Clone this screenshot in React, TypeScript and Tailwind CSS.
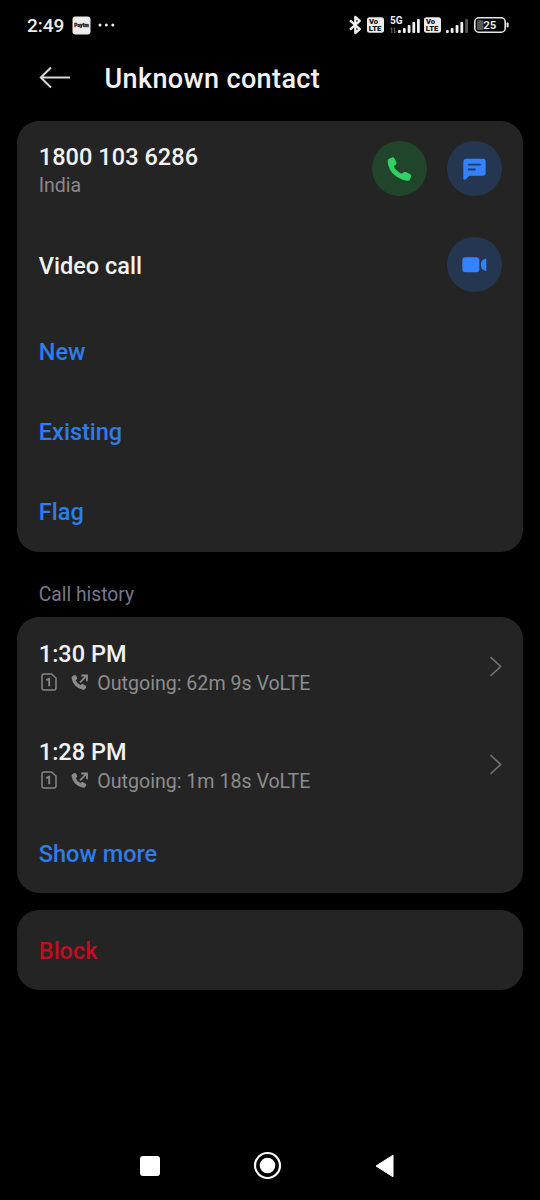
import React from "react";

// --- Status bar icons ---
const BluetoothIcon = () => (
  <svg width="14" height="20" viewBox="0 0 14 20" fill="none" stroke="#f0f0f0" strokeWidth="2.3">
    <path d="M2 5.3 L11.8 14.2 L7.3 18 V2 L11.8 5.8 L2 14.7" strokeLinejoin="round" />
  </svg>
);

const VolteBadge = () => (
  <svg width="17" height="16" viewBox="0 0 17 16">
    <rect y="0.3" width="17" height="15.4" rx="2.5" fill="#ececec" />
    <text x="2" y="7.4" fontSize="7.6" fontWeight="900" fill="#111">Vo</text>
    <text x="1.8" y="14" fontSize="7.6" fontWeight="900" fill="#111">LTE</text>
  </svg>
);

const SignalBars = ({ lastBar = "#f0f0f0" }: { lastBar?: string }) => (
  <svg width="22" height="15" viewBox="0 0 22 15" fill="#f0f0f0">
    <rect x="0" y="12" width="2.8" height="3" rx="1" />
    <rect x="4.7" y="10" width="2.8" height="5" rx="1" />
    <rect x="9.6" y="7" width="2.8" height="8" rx="1" />
    <rect x="14.4" y="4" width="2.8" height="11" rx="1" />
    <rect x="19.2" y="1" width="2.8" height="14" rx="1" fill={lastBar} />
  </svg>
);

const NetworkSignal = () => (
  <svg width="31" height="18" viewBox="0 0 31 18" fill="#f0f0f0">
    <text x="0" y="8" fontSize="10" fontWeight="700">5G</text>
    <path d="M1.8 17 V11.5 M0 13.3 L1.8 11.5 M4.5 11.5 V17 L6.3 15.2" stroke="#666" strokeWidth="1" fill="none" />
    <rect x="8" y="14" width="2.8" height="3" rx="1" />
    <rect x="12.9" y="12" width="2.8" height="5" rx="1" />
    <rect x="17.7" y="9" width="2.8" height="8" rx="1" />
    <rect x="22.4" y="6" width="2.8" height="11" rx="1" />
    <rect x="27" y="3" width="2.8" height="14" rx="1" />
  </svg>
);

const BatteryIcon = () => (
  <svg width="35" height="16" viewBox="0 0 35 16">
    <rect x="0.8" y="0.8" width="30.4" height="14.4" rx="4" fill="none" stroke="#e8e8e8" strokeWidth="1.6" />
    <rect x="3" y="3" width="6.5" height="10" rx="1.5" fill="#555" />
    <rect x="32.6" y="5.5" width="2" height="5" rx="0.8" fill="#e8e8e8" />
    <text x="15.7" y="12.2" textAnchor="middle" fontSize="11.5" fontWeight="600" fill="#f0f0f0">25</text>
  </svg>
);

const StatusBar = () => (
  <div className="flex h-[50px] items-center pl-[27px] pr-[31px]">
    <span className="w-[45px] text-[19px] leading-none font-medium text-[#eeeeee]">2:49</span>
    <svg width="19" height="19" viewBox="0 0 19 19">
      <rect x="0.5" y="0.5" width="18" height="18" rx="3" fill="#ececec" />
      <text x="9.5" y="11.3" textAnchor="middle" fontSize="5" fontWeight="900" fill="#222" stroke="#222" strokeWidth="0.3">Paytm</text>
    </svg>
    <svg className="ml-[7px]" width="17" height="4" viewBox="0 0 17 4" fill="#f0f0f0">
      <circle cx="2" cy="2" r="1.5" />
      <circle cx="8.3" cy="2" r="1.5" />
      <circle cx="14.8" cy="2" r="1.5" />
    </svg>
    <div className="ml-auto flex items-center">
      <BluetoothIcon />
      <div className="ml-[5px]"><VolteBadge /></div>
      <div className="ml-[6px]"><NetworkSignal /></div>
      <div className="ml-[3px]"><VolteBadge /></div>
      <div className="ml-[5px]"><SignalBars lastBar="#555" /></div>
      <div className="ml-[6px]"><BatteryIcon /></div>
    </div>
  </div>
);

// --- Action icons ---
const CallIcon = () => (
  <svg width="55" height="55" viewBox="0 0 165 165" fill="#32d164">
    <path d="M50 54 L58 50 Q65 47 68 53 L73 63 Q75 68 71 71 L65 76 Q72 91 88 98 L95 94 Q99 92 103 94 L115 100 Q119 103 117 108 L113 116 Q110 121 103 119 Q81 115 65 100 Q49 84 47 62 Q46 57 50 54 Z" />
  </svg>
);

const MessageIcon = () => (
  <svg width="55" height="55" viewBox="0 0 165 165" fill="#3482ff">
    <path d="M58 53 H107 Q116 53 116 62 V95 Q116 104 107 104 H67 L55 116 Q49 118 49 112 V62 Q49 53 58 53 Z" />
    <path d="M65 71 H99 M65 85.5 H84" stroke="#223a60" strokeWidth="5.5" strokeLinecap="round" />
  </svg>
);

const VideoIcon = () => (
  <svg width="55" height="55" viewBox="0 0 165 165" fill="#3482ff">
    <rect x="46" y="61" width="51" height="45" rx="9" />
    <path d="M102 78 Q103 70 111 67 L118 65 V102 L111 100 Q103 97 102 89 Z" />
  </svg>
);

const SimIcon = () => (
  <svg width="16" height="18" viewBox="0 0 16 18" fill="none" stroke="#858585" strokeWidth="1.5">
    <path d="M3 0.9 H10.5 L15 5 V15 Q15 17 13 17 H3 Q1 17 1 15 V2.9 Q1 0.9 3 0.9 Z" />
    <path d="M5.2 7.2 L8.2 5.8 V13.3" strokeWidth="1.9" />
  </svg>
);

const OutgoingIcon = () => (
  <svg width="18" height="17" viewBox="0 0 18 17" fill="#8a8a8a">
    <path d="M1 2.6 L2.9 1.2 Q4.3 0.4 5.1 1.8 L6.1 3.8 Q6.5 4.9 5.5 5.6 L4.7 6.3 Q6.1 9.5 9.5 11 L10.5 10.3 Q11.3 9.7 12.3 10.3 L14.7 11.7 Q15.7 12.4 15.1 13.4 L14.2 15 Q13.4 16 12 15.7 Q7.5 15 4.3 11.8 Q1 8.4 0.6 4.1 Q0.5 3.1 1 2.6 Z" />
    <path d="M9 8.3 L15.7 1.7 M10.3 1.5 H16 V7.2" fill="none" stroke="#8a8a8a" strokeWidth="1.8" />
  </svg>
);

const ChevronIcon = () => (
  <svg width="12" height="21" viewBox="0 0 12 21" fill="none" stroke="#747474" strokeWidth="1.7">
    <path d="M1 1.5 L10.7 10.5 L1 19.5" strokeLinecap="round" strokeLinejoin="round" />
  </svg>
);

// --- Shared pieces ---
const Card = ({ children }: { children: React.ReactNode }) => (
  <section className="mr-[17px] ml-[16.5px] rounded-[22px] bg-[#242424] pr-[21.5px] pl-[22.3px]">{children}</section>
);

const LinkRow = ({ label, color = "text-[#2f7cec]" }: { label: string; color?: string }) => (
  <button className={`flex h-20 w-full items-center pt-px text-[23.5px] leading-7 font-medium ${color}`}>{label}</button>
);

const calls = [
  { time: "1:30 PM", detail: "Outgoing: 62m 9s VoLTE" },
  { time: "1:28 PM", detail: "Outgoing: 1m 18s VoLTE" },
];

export default function App() {
  return (
    <div className="flex h-[1200px] w-[540px] flex-col overflow-hidden bg-black font-[Roboto,sans-serif] text-[#f2f2f2]">
      <StatusBar />

      <header className="flex h-[70.6px] items-start pt-[11px] pl-[39px]">
        <svg className="mt-[5px]" width="32" height="24" viewBox="0 0 32 24" fill="none" stroke="#d8d8d8" strokeWidth="2">
          <path d="M31 11.5 H2 M12 1.5 L1.8 11.5 L12 21.5" />
        </svg>
        <h1 className="ml-[33.5px] pt-px text-[27px] leading-[34px] font-medium tracking-[0.38px]">Unknown contact</h1>
      </header>

      <Card>
        <div className="flex h-24 items-center">
          <div className="flex-1 pt-[6px]">
            <p className="text-[23.5px] leading-7 font-medium tracking-[0.05px]">1800 103 6286</p>
            <p className="text-[19.5px] leading-[30px] text-[#898989]">India</p>
          </div>
          <button className="size-[55px] rounded-full bg-[#20452b]"><CallIcon /></button>
          <button className="ml-[19.5px] size-[55px] rounded-full bg-[#243650]"><MessageIcon /></button>
        </div>
        <div className="flex h-[95px] items-center justify-between">
          <p className="pt-[3px] text-[23.5px] leading-7 font-medium">Video call</p>
          <button className="mt-px size-[55px] rounded-full bg-[#243650]"><VideoIcon /></button>
        </div>
        <LinkRow label="New" />
        <LinkRow label="Existing" />
        <LinkRow label="Flag" />
      </Card>

      <h2 className="h-[65.7px] px-[38.8px] pt-[29.5px] text-[19.3px] leading-7 text-[#79788a]">Call history</h2>

      <Card>
        {calls.map((call) => (
          <div key={call.time} className="flex h-[98px] items-center justify-between">
            <div className="pt-[6px]">
              <p className="text-[23.5px] leading-7 font-medium">{call.time}</p>
              <div className="flex h-[30px] items-center pl-[2.5px]">
                <div className="-mt-[3px]"><SimIcon /></div>
                <div className="-mt-px ml-[14px]"><OutgoingIcon /></div>
                <span className="ml-[8px] pt-[2px] text-[19.6px] leading-7 text-[#8c8c8c]">{call.detail}</span>
              </div>
            </div>
            <ChevronIcon />
          </div>
        ))}
        <LinkRow label="Show more" />
      </Card>

      <div className="h-[17px]" />

      <Card>
        <LinkRow label="Block" color="text-[#c70b21]" />
      </Card>

      {/* Navigation bar */}
      <nav className="mt-auto flex h-[69px] items-center pl-[139.5px]">
        <div className="size-5 rounded-[3px] bg-white" />
        <svg className="ml-[93.5px]" width="29" height="29" viewBox="0 0 29 29">
          <circle cx="14.5" cy="14.5" r="12.5" fill="none" stroke="#fff" strokeWidth="2.2" />
          <circle cx="14.5" cy="14.5" r="7.8" fill="#fff" />
        </svg>
        <svg className="ml-[93px]" width="20" height="24" viewBox="0 0 20 24" fill="#fff">
          <path d="M1 12 L18 1.2 V22.8 Z" stroke="#fff" strokeWidth="1" strokeLinejoin="round" />
        </svg>
      </nav>
    </div>
  );
}
